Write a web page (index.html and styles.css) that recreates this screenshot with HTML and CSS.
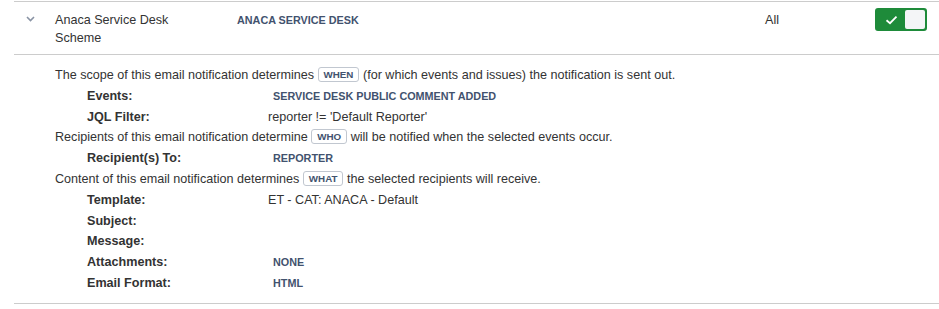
FILE: index.html
```html
<!DOCTYPE html>
<html lang="en">
<head>
  <meta charset="utf-8" />
  <title>notifications</title>
  <link rel="stylesheet" href="styles.css">
</head>

<body>
  <div class="scheme">
    <div class="scheme-row">
      <div class="toggle-col">
        <svg class="chevron" width="9" height="6" viewBox="0 0 9 6">
          <path d="M1 1 L4.5 4.5 L8 1" fill="none" stroke="#8993a4" stroke-width="1.6" />
        </svg>
      </div>
      <div class="name">Anaca Service Desk Scheme</div>
      <div class="project"><span class="lozenge-text">Anaca Service Desk</span></div>
      <div class="scope">All</div>
      <div class="switch">
        <span class="switch-on">
          <svg width="13" height="10" viewBox="0 0 13 10">
            <path d="M1.5 5.2 L5 8.2 L11.5 1.6" fill="none" stroke="#fff" stroke-width="1.8" />
          </svg>
        </span>
        <span class="switch-knob"></span>
      </div>
    </div>

    <div class="details">
      <p class="line">The scope of this email notification determines <span class="tag">when</span> (for which events and issues) the notification is sent out.</p>
      <div class="field"><span class="label">Events:</span><span class="value value-caps">Service Desk Public Comment Added</span></div>
      <div class="field"><span class="label">JQL Filter:</span><span class="value">reporter != 'Default Reporter'</span></div>

      <p class="line">Recipients of this email notification determine <span class="tag">who</span> will be notified when the selected events occur.</p>
      <div class="field"><span class="label">Recipient(s) To:</span><span class="value value-caps">Reporter</span></div>

      <p class="line">Content of this email notification determines <span class="tag">what</span> the selected recipients will receive.</p>
      <div class="field"><span class="label">Template:</span><span class="value">ET - CAT: ANACA - Default</span></div>
      <div class="field"><span class="label">Subject:</span><span class="value"></span></div>
      <div class="field"><span class="label">Message:</span><span class="value"></span></div>
      <div class="field"><span class="label">Attachments:</span><span class="value value-caps">None</span></div>
      <div class="field"><span class="label">Email Format:</span><span class="value value-caps">HTML</span></div>
    </div>
  </div>
</body>
</html>
```

FILE: styles.css
```css
html, body {
  margin: 0;
  padding: 0;
  background: #fff;
  font-family: "Liberation Sans", Arial, sans-serif;
  font-size: 12.6px;
  color: #333;
}

.scheme {
  margin: 1px 0 0 14px;
  border-top: 1px solid #ccc;
}

.scheme-row {
  display: grid;
  grid-template-columns: 41px 182px 528px 110px 52px;
  padding: 9px 0 7px;
  line-height: 18px;
  border-bottom: 1px solid #ccc;
}

.toggle-col {
  padding: 5px 0 0 12px;
}

.chevron {
  display: block;
}

.name {
  padding-right: 40px;
}

.lozenge-text {
  font-size: 10.8px;
  font-weight: bold;
  text-transform: uppercase;
  color: #42526e;
}

.project {
  line-height: 20px;
  margin-top: -1px;
}

.scope {
  line-height: 20px;
  margin-top: -1px;
}

.switch {
  display: flex;
  width: 52px;
  height: 23px;
  box-sizing: border-box;
  border: 2px solid #1e8b3a;
  border-radius: 3px;
  background: #1e8b3a;
  margin-top: -3px;
}

.switch-on {
  width: 28px;
  display: flex;
  align-items: center;
  justify-content: center;
}

.switch-knob {
  flex: 1;
  background: #f4f5f7;
  border-radius: 2px;
}

.details {
  padding: 10px 0 9px 41px;
  line-height: 20.8px;
  border-bottom: 1px solid #ccc;
}

.line {
  margin: 0;
}

.tag {
  display: inline-block;
  font-size: 9.8px;
  font-weight: bold;
  text-transform: uppercase;
  color: #42526e;
  line-height: 13px;
  padding: 0 5px;
  border: 1px solid #c1c7d0;
  border-radius: 3px;
  vertical-align: 1px;
}

.field {
  display: flex;
  padding-left: 32px;
}

.label {
  width: 181px;
  font-weight: bold;
}

.value-caps {
  padding-left: 5px;
  font-size: 10.8px;
  font-weight: bold;
  text-transform: uppercase;
  color: #42526e;
}
```
